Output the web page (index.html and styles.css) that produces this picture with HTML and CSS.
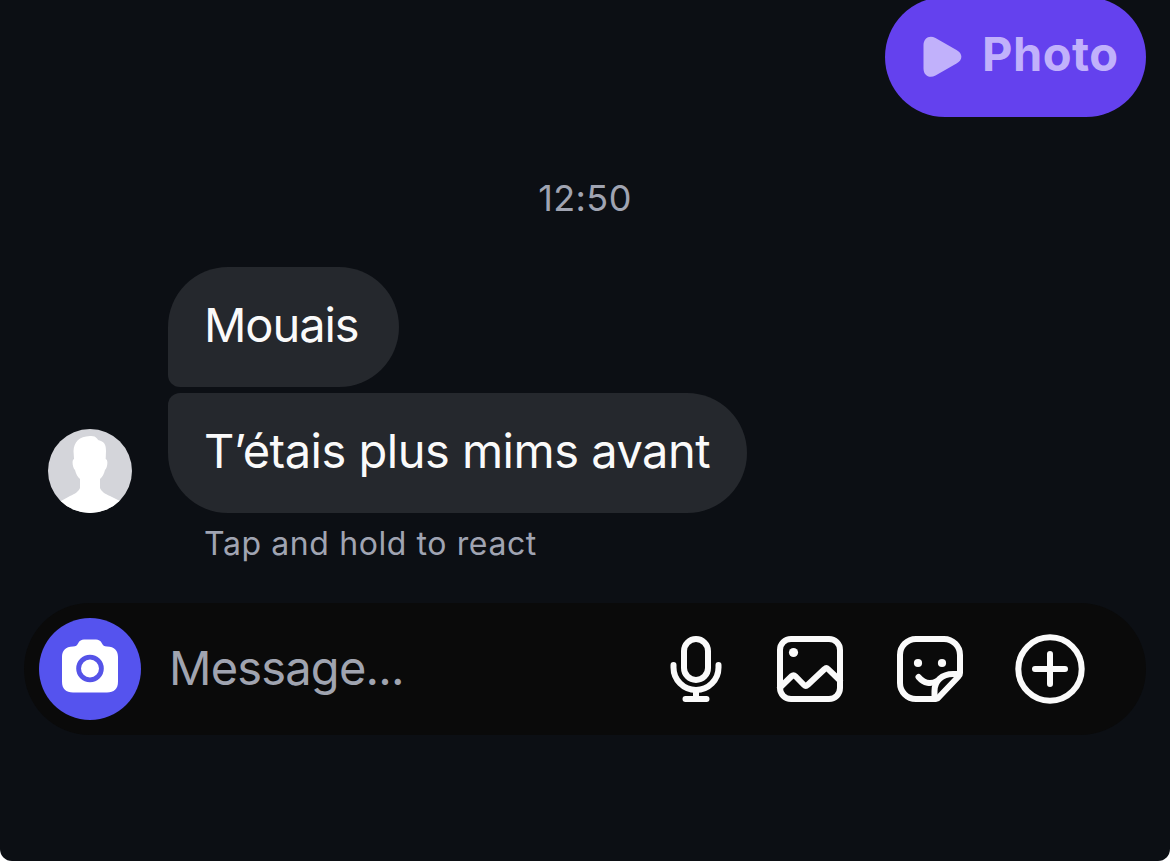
FILE: index.html
```
<!DOCTYPE html>
<html lang="fr">
<head>
    <meta charset="UTF-8">
    <meta name="viewport" content="width=device-width, initial-scale=1.0">
    <title>Messages</title>
    <link rel="stylesheet" href="styles.css">
</head>
<body>
<main class="chat">
    <div class="bubble sent">
        <svg class="play" width="40" height="44" viewBox="0 0 40 44">
            <path d="M.5 10 C.5 3 6.500 -.5 12.500 3 L33.500 15 C40 18.500 40 25 33.500 28.500 L12.500 40.500 C6.500 44 .5 40.500 .5 33.500 Z"/>
        </svg>
        <span class="photo-label">Photo</span>
    </div>

    <time class="time">12:50</time>

    <div class="received-group">
        <svg class="avatar" width="84" height="84" viewBox="0 0 84 84">
            <path d="M42 7 C45 6.700 47.500 7.400 49 9.500 C50 11 51 11.500 53 12 C57 13.500 58 17 58 22 L57.700 30 C60.500 30.500 59.500 39 57 41 C56 45 54.500 48 52 50 V59 C53 62 57 65 62 67 L72 72 L84 84 H0 L13 72 L22 67 C27 65 31 62 32 59 V50 C29.500 48 28 45 27 41 C24.500 39 23.500 30.500 26 30 L25.500 22 C26 13 31 7.500 42 7 Z"/>
        </svg>
        <div class="messages">
            <div class="bubble received first">Mouais</div>
            <div class="bubble received last">T’étais plus mims avant</div>
        </div>
    </div>
    <p class="hint">Tap and hold to react</p>

    <div class="composer">
        <button class="camera" aria-label="Camera">
            <svg width="102" height="102" viewBox="0 0 102 102">
                <path d="M34 28.500 C37 28.500 38 27.500 39 25.500 C40.500 22.500 42.500 21.500 45 21.500 H57 C59.500 21.500 61.500 22.500 63 25.500 C64 27.500 65 28.500 68 28.500 C75.500 28.500 79 33 79 39 V63.500 C79 71 75 74.500 68 74.500 H34 C27 74.500 23 71 23 63.500 V39 C23 33 26.500 28.500 34 28.500 Z"/>
                <circle class="lens" cx="51" cy="50.500" r="11.400"/>
            </svg>
        </button>
        <div class="placeholder">Message...</div>
        <div class="actions">
            <button class="mic" aria-label="Voice message">
                <svg class="icon" viewBox="0 0 72 72">
                    <rect x="24" y="6" width="24" height="41" rx="12"/>
                    <path d="M13.500 32 V34.500 A22.500 22.500 0 0 0 58.500 34.500 V32 M36 57 V66 M25.500 66 H46.500"/>
                </svg>
            </button>
            <button aria-label="Gallery">
                <svg class="icon" viewBox="0 0 72 72">
                    <rect x="6" y="6" width="60" height="60" rx="11"/>
                    <path d="M6 54.500 L17.800 43 Q19.500 41.300 21.200 43 L30 52 Q31.800 53.800 33.600 52 L50.600 36 Q52.300 34.300 54 36 L66 47.500"/>
                    <circle class="dot" cx="19.500" cy="19.500" r="4.600"/>
                </svg>
            </button>
            <button aria-label="Sticker">
                <svg class="icon" viewBox="0 0 72 72">
                    <path d="M42 66 H22 A16 16 0 0 1 6 50 V22 A16 16 0 0 1 22 6 H50 A16 16 0 0 1 66 22 V40 Q66 42 64.500 43.500 L44.500 64.500 Q43.500 66 42 66 Z"/>
                    <path d="M65 41 H59 C48 41 40.500 48 40.500 58 V65"/>
                    <path d="M24.500 44 C30 50.500 37 51.500 43 48"/>
                    <circle class="dot" cx="24" cy="30" r="4.100"/>
                    <circle class="dot" cx="48" cy="30" r="4.100"/>
                </svg>
            </button>
            <button aria-label="More">
                <svg class="icon" viewBox="0 0 72 72">
                    <circle cx="36" cy="36" r="31.700"/>
                    <path d="M36 21 V51 M21 36 H51"/>
                </svg>
            </button>
        </div>
    </div>
</main>
</body>
</html>
```
FILE: styles.css
```
html {
    background: #fff;
}

body {
    margin: 0;
    font-family: Inter, "Liberation Sans", sans-serif;
}

.chat {
    box-sizing: border-box;
    display: flex;
    flex-direction: column;
    height: 861px;
    padding: 0 24px;
    overflow: hidden;
    background: #0c0f14;
    border-radius: 0 0 12px 12px;
}

.bubble {
    box-sizing: border-box;
    display: flex;
    align-items: center;
    height: 120px;
    border-radius: 60px;
    font-size: 47px;
    line-height: 56px;
    white-space: nowrap;
    flex-shrink: 0;
}

.sent {
    align-self: flex-end;
    width: 261px;
    margin-top: -3px;
    padding-left: 38px;
    gap: 19px;
    background: #6441ee;
    color: #c1b1fb;
    font-weight: 700;
}

.play {
    fill: #c1b1fb;
}

.photo-label {
    margin-top: -6px;
    letter-spacing: 0.5px;
}

.time {
    align-self: center;
    height: 44px;
    margin-top: 59px;
    font-size: 36px;
    line-height: 44px;
    letter-spacing: 0.4px;
    color: #a0a4b2;
}

.received-group {
    display: flex;
    align-items: flex-end;
    gap: 36px;
    margin: 47px 0 0 24px;
}

.avatar {
    background: #d4d5da;
    border-radius: 50%;
    fill: #fff;
}

.messages {
    display: flex;
    flex-direction: column;
    gap: 6px;
}

.received {
    padding: 0 0 4px 36px;
    background: #25282d;
    color: #fafafa;
}

.first {
    width: 231px;
    border-bottom-left-radius: 12px;
    letter-spacing: -1.1px;
}

.last {
    width: 579px;
    border-top-left-radius: 12px;
    letter-spacing: -0.5px;
}

.hint {
    height: 40px;
    margin: 11px 0 0 180px;
    font-size: 32px;
    line-height: 40px;
    letter-spacing: 0.6px;
    color: #a0a4b2;
}

.composer {
    box-sizing: border-box;
    display: flex;
    align-items: center;
    height: 132px;
    margin-top: 39px;
    padding: 0 60px 0 15px;
    background: #0a0a0a;
    border-radius: 66px;
}

button {
    display: flex;
    padding: 0;
    border: 0;
    background: none;
}

.camera {
    background: #5553ee;
    border-radius: 50%;
    fill: #fff;
}

.lens {
    fill: none;
    stroke: #5553e8;
    stroke-width: 4.8;
}

.placeholder {
    margin-left: 28px;
    padding-bottom: 2px;
    font-size: 47px;
    line-height: 56px;
    letter-spacing: -0.8px;
    color: #a0a4b0;
}

.actions {
    display: flex;
    gap: 48px;
    margin-left: auto;
}

.mic {
    margin-right: -6px;
}

.icon {
    width: 72px;
    height: 72px;
    fill: none;
    stroke: #fafafa;
    stroke-width: 6;
    stroke-linecap: round;
    stroke-linejoin: round;
}

.dot {
    fill: #fafafa;
    stroke: none;
}
```
